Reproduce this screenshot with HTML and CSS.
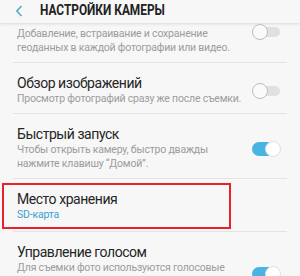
FILE: index.html
```html
<!DOCTYPE html>
<html lang="ru">
<head>
<meta charset="utf-8">
<title>Настройки камеры</title>
<link rel="stylesheet" href="styles.css">
</head>
<body>
<header class="appbar">
  <svg class="back" width="8" height="12" viewBox="0 0 8 12"><path d="M6.5 1 L1.8 6 L6.5 11" fill="none" stroke="#4aa5c8" stroke-width="1.4"/></svg>
  <h1 class="appbar-title">НАСТРОЙКИ КАМЕРЫ</h1>
</header>
<main class="list">
  <div class="row row-first">
    <div class="texts">
      <div class="sub">Добавление, встраивание и сохранение<br>геоданных в каждой фотографии или видео.</div>
    </div>
    <span class="toggle"><span class="knob"></span></span>
  </div>
  <div class="row">
    <div class="texts">
      <div class="title">Обзор изображений</div>
      <div class="sub">Просмотр фотографий сразу же после съемки.</div>
    </div>
    <span class="toggle"><span class="knob"></span></span>
  </div>
  <div class="row">
    <div class="texts">
      <div class="title">Быстрый запуск</div>
      <div class="sub">Чтобы открыть камеру, быстро дважды<br>нажмите клавишу “Домой”.</div>
    </div>
    <span class="toggle on"><span class="knob"></span></span>
  </div>
  <div class="row row-storage">
    <div class="texts">
      <div class="title">Место хранения</div>
      <div class="sub value">SD-карта</div>
    </div>
    <span class="highlight"></span>
  </div>
  <div class="row">
    <div class="texts">
      <div class="title">Управление голосом</div>
      <div class="sub">Для съемки фото используются голосовые<br>команды «Улыбка», «Сыр», «Снимаю»<br>или «Съемка», а для видео — «Запись».</div>
    </div>
    <span class="toggle on"><span class="knob"></span></span>
  </div>
</main>
</body>
</html>
```

FILE: styles.css
```css
html, body {
  margin: 0;
  padding: 0;
  background: #f7f7f7;
  overflow: hidden;
}
body {
  width: 300px;
  height: 276px;
  font-family: Roboto, "Noto Sans", sans-serif;
}
.appbar {
  position: relative;
  z-index: 2;
  height: 23px;
  background: #f7f7f7;
  box-shadow: 0 1px 3px rgba(0,0,0,0.12);
  display: flex;
  align-items: center;
}
.back {
  margin-left: 15px;
  margin-top: -2px;
  flex: none;
}
.appbar-title {
  margin: -3px 0 0 17px;
  font-family: Roboto, "Noto Sans", sans-serif;
  font-weight: bold;
  font-size: 15px;
  line-height: 18px;
  color: #222;
  white-space: nowrap;
  transform: scaleX(0.79);
  transform-origin: left center;
}
.row {
  position: relative;
  margin: 0 13px;
  padding: 12px 6px 7px 4px;
  border-bottom: 1px solid #e3e3e3;
  display: flex;
  align-items: center;
  justify-content: space-between;
}
.row-first {
  padding-top: 4px;
  align-items: flex-start;
}
.row-first .toggle {
  position: relative;
  z-index: 3;
  margin-top: -3px;
}
.row-storage {
  padding-bottom: 9px;
}
.texts {
  flex: 1;
  min-width: 0;
}
.title {
  font-size: 14px;
  line-height: 17px;
  letter-spacing: -0.45px;
  color: #252525;
  white-space: nowrap;
}
.sub {
  font-size: 10.5px;
  line-height: 14px;
  letter-spacing: -0.2px;
  color: #9c9c9c;
  white-space: nowrap;
}
.sub.value {
  color: #3d9fd1;
}
.toggle {
  position: relative;
  width: 29px;
  height: 16px;
  flex: none;
}
.toggle::before {
  content: "";
  position: absolute;
  left: 2px;
  right: 1px;
  top: 3px;
  height: 10px;
  border-radius: 5px;
  background: #e0e0e0;
}
.knob {
  position: absolute;
  left: 0;
  top: 0;
  width: 14px;
  height: 14px;
  border-radius: 50%;
  background: #fafafa;
  border: 1px solid #bdbdbd;
}
.toggle.on::before {
  top: 1px;
  height: 14px;
  border-radius: 7px;
  left: 0;
  right: 1px;
  background: #48b4e3;
}
.toggle.on .knob {
  left: auto;
  right: 0;
  background: #fff;
  border-color: #e0e0e0;
}
.highlight {
  position: absolute;
  left: -11px;
  top: 4px;
  width: 225px;
  height: 42px;
  border: 2px solid #e8212b;
}
```
